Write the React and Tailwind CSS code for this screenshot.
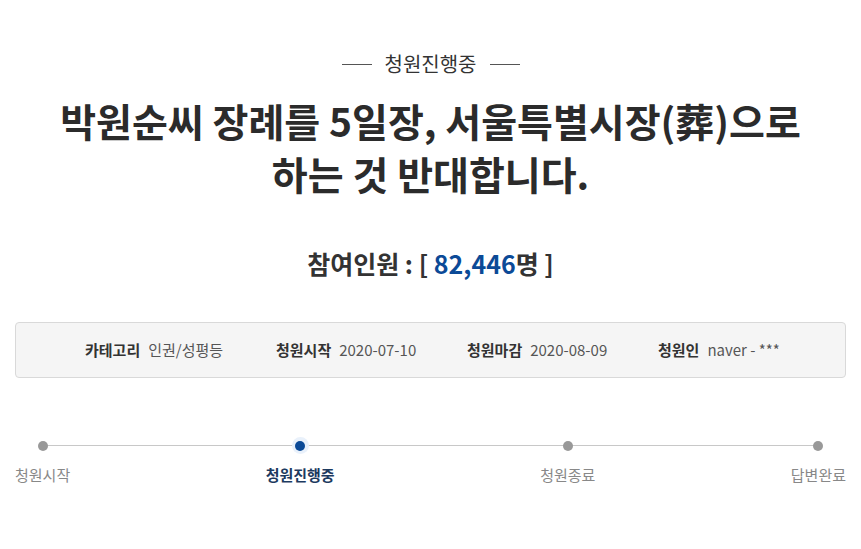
export default function App() {
  const font = { fontFamily: '"Noto Sans CJK KR", "Noto Sans", sans-serif' };
  const info = [
    ["카테고리", "인권/성평등"],
    ["청원시작", "2020-07-10"],
    ["청원마감", "2020-08-09"],
    ["청원인", "naver - ***"],
  ];
  const steps = [
    { label: "청원시작", active: false },
    { label: "청원진행중", active: true },
    { label: "청원종료", active: false },
    { label: "답변완료", active: false },
  ];

  return (
    <div className="w-[861px] h-[549px] bg-white text-[#333]" style={font}>
      <div className="flex flex-col items-center pt-[49px]">
        <div className="flex items-center gap-[13px]">
          <span className="w-[30px] h-px bg-[#555]" />
          <span className="text-[20px] leading-[30px] text-[#333]">청원진행중</span>
          <span className="w-[30px] h-px bg-[#555]" />
        </div>
        <h1 className="mt-[15px] text-center text-[39px] font-bold leading-[53px] text-[#2b2b2b]">
          박원순씨 장례를 5일장, 서울특별시장(葬)으로
          <br />
          하는 것 반대합니다.
        </h1>
        <div className="mt-[45px] text-[25px] font-bold leading-[36px] text-[#333]">
          참여인원 : [ <span className="text-[#0b4a97]">82,446</span>명 ]
        </div>
      </div>

      <div className="mx-[15px] mt-[41px] h-[56px] rounded-[4px] border border-[#d9d9d9] bg-[#f5f5f5] flex items-center pl-[69px]">
        {info.map(([k, v], i) => (
          <div key={k} className={"flex items-center text-[15px] " + (i < 3 ? "w-[191px]" : "")}>
            <span className="font-bold text-[#333]">{k}</span>
            <span className="ml-[8px] text-[#555]">{v}</span>
          </div>
        ))}
      </div>

      <div className="relative mx-[15px] mt-[59px]">
        <div className="absolute left-[27px] right-[27px] top-[8px] h-px bg-[#c8c8c8]" />
        <div className="relative flex justify-between">
          {steps.map((s) => (
            <div
              key={s.label}
              className={"flex flex-col items-center " + (s.active ? "mr-[10px]" : "")}
            >
              <div className="h-[17px] flex items-center justify-center">
                {s.active ? (
                  <span className="w-[17px] h-[17px] rounded-full bg-[#e9f1fb] flex items-center justify-center">
                    <span className="w-[10px] h-[10px] rounded-full bg-[#0b4a97]" />
                  </span>
                ) : (
                  <span className="w-[10px] h-[10px] rounded-full bg-[#999]" />
                )}
              </div>
              <span
                className={
                  "mt-[11px] text-[15px] leading-[20px] " +
                  (s.active ? "font-bold text-[#1d3a5f]" : "text-[#888]")
                }
              >
                {s.label}
              </span>
            </div>
          ))}
        </div>
      </div>
    </div>
  );
}
